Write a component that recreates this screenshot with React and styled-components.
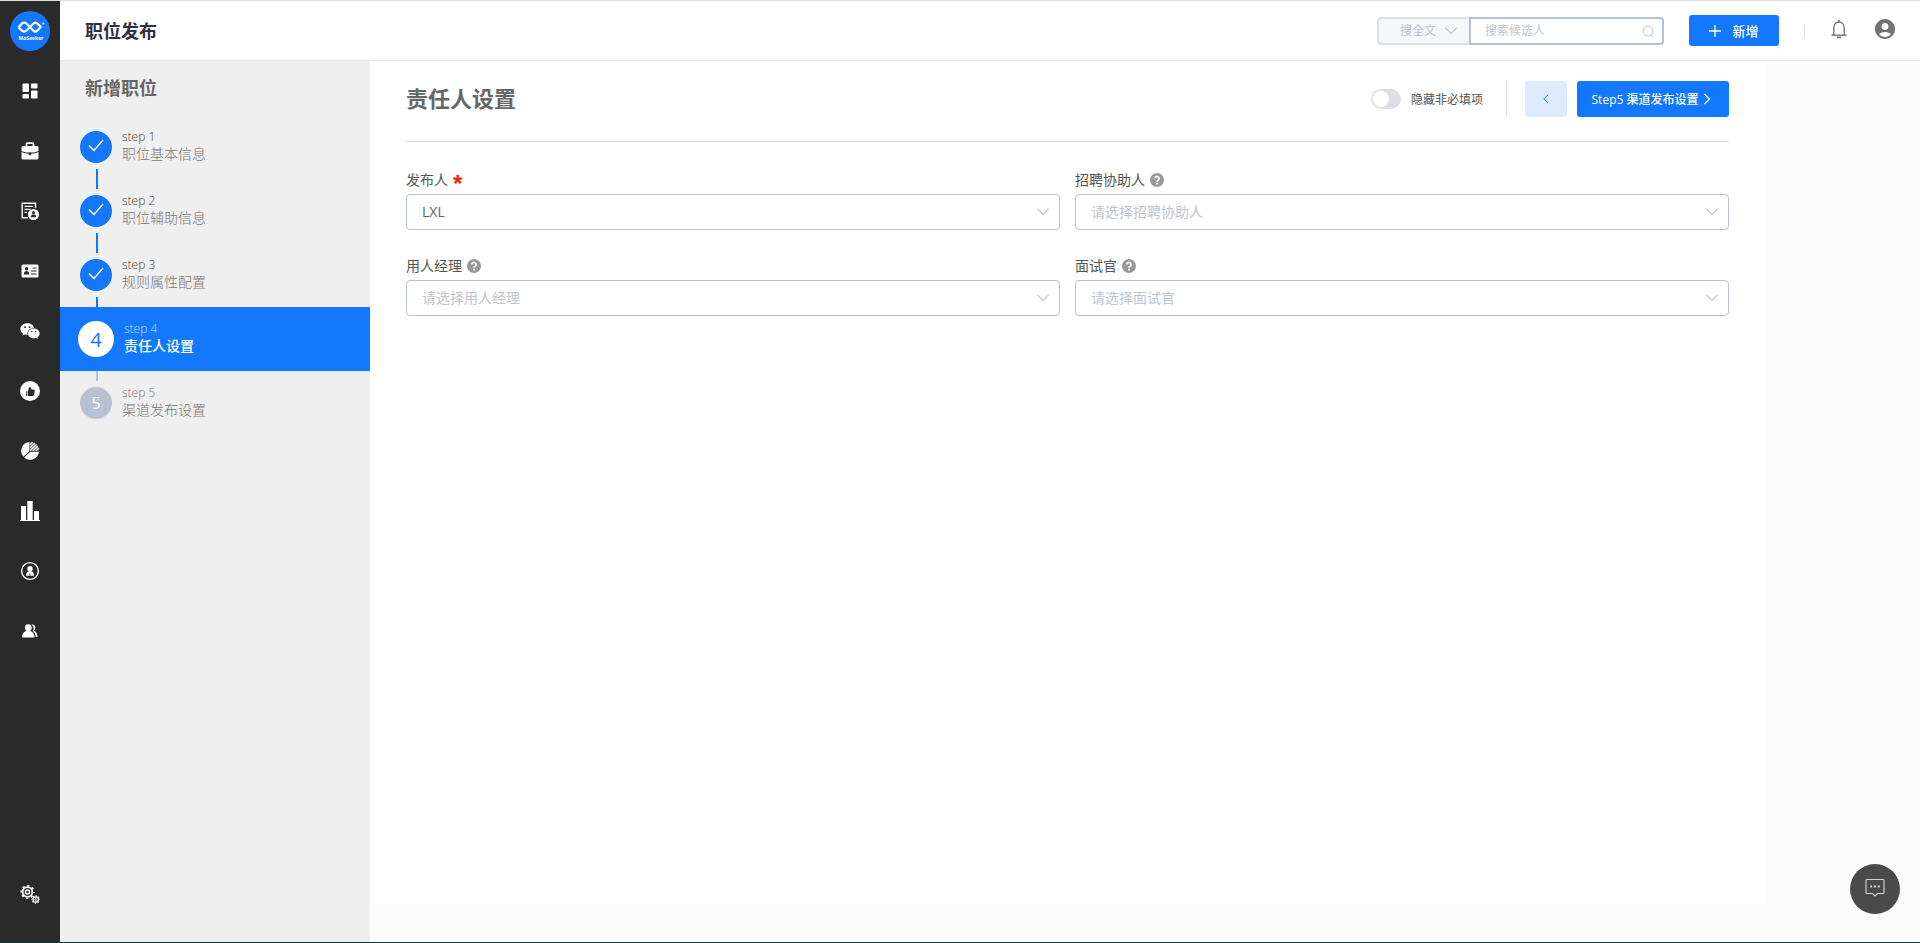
import React, { useState } from 'react';
import styled, { createGlobalStyle, ThemeProvider } from 'styled-components';
import { AiFillWechat, AiFillLike } from 'react-icons/ai';
import { MdAccountCircle } from 'react-icons/md';

const theme = {
  colors: {
    primary: '#1478ff',
    primaryLight: '#deebff',
    dark: '#2a2a2a',
    page: '#fbfbfb',
    panel: '#efefef',
    surface: '#ffffff',
    border: '#b8bfd0',
    line: '#dcdfe6',
    muted: '#b8c1d1',
    placeholder: '#bfc4ce',
    text: '#555555',
    heading: '#666666'
  }
};

const GlobalStyle = createGlobalStyle`
  * {
    box-sizing: border-box;
  }

  body {
    margin: 0;
    font-family: 'Open Sans', 'Noto Sans CJK SC', sans-serif;
    font-size: 14px;
    color: #555555;
  }

  button, input, select {
    font-family: inherit;
    margin: 0;
  }
`;

const Page = styled.div`
  display: flex;
  min-height: 100vh;
  background: ${({ theme }) => theme.colors.page};
  border-top: 1px solid ${({ theme }) => theme.colors.line};
  border-bottom: 1px solid #1f3038;
`;

const Sidebar = styled.nav`
  display: flex;
  flex-direction: column;
  align-items: center;
  flex: 0 0 60px;
  padding: 10px 0 18px;
  background: ${({ theme }) => theme.colors.dark};
`;

const LogoLink = styled.a`
  display: block;
  height: 40px;
  margin-bottom: 10px;
`;

const NavLink = styled.a`
  display: flex;
  align-items: center;
  justify-content: center;
  width: 60px;
  height: 60px;
  margin-top: ${({ $last }) => ($last ? 'auto' : '0')};
  color: #ffffff;
`;

const Content = styled.div`
  display: flex;
  flex-direction: column;
  flex: 1;
  min-width: 0;
`;

const Header = styled.header`
  display: flex;
  align-items: center;
  height: 60px;
  padding: 0 23px 0 25px;
  background: ${({ theme }) => theme.colors.surface};
  border-bottom: 1px solid #e6e8f0;
`;

const PageTitle = styled.h1`
  flex: 1;
  margin: 0;
  font-size: 18px;
  line-height: 24px;
  font-weight: 700;
  color: #303040;
`;

const SearchBox = styled.form`
  display: flex;
  height: 28px;
  margin-right: 25px;
`;

const ScopeWrap = styled.div`
  display: grid;
  align-items: center;
  width: 92px;
  background: #f5f7fa;
  border: 2px solid ${({ theme }) => theme.colors.line};
  border-right: none;
  border-radius: 4px 0 0 4px;

  > * {
    grid-area: 1 / 1;
  }

  > svg {
    justify-self: end;
    margin-right: 11px;
    pointer-events: none;
  }
`;

const ScopeSelect = styled.select`
  appearance: none;
  width: 100%;
  height: 24px;
  padding: 0 0 0 21px;
  border: none;
  outline: none;
  background: transparent;
  font-size: 12px;
  color: ${({ theme }) => theme.colors.muted};
`;

const SearchField = styled.div`
  display: flex;
  align-items: center;
  width: 195px;
  padding: 0 8px 0 14px;
  border: 2px solid ${({ theme }) => theme.colors.muted};
  border-radius: 0 4px 4px 0;
`;

const SearchInput = styled.input`
  flex: 1;
  min-width: 0;
  padding: 0;
  border: none;
  outline: none;
  background: transparent;
  font-size: 12px;

  &::placeholder {
    color: ${({ theme }) => theme.colors.placeholder};
  }
`;

const Button = styled.button`
  display: flex;
  align-items: center;
  justify-content: center;
  gap: ${({ $gap }) => $gap || '6px'};
  height: ${({ $compact }) => ($compact ? '31px' : '36px')};
  width: ${({ $width }) => $width || 'auto'};
  padding: 0;
  border: none;
  border-radius: 3px;
  background: ${({ theme, $light }) => ($light ? theme.colors.primaryLight : theme.colors.primary)};
  color: ${({ theme, $light }) => ($light ? theme.colors.primary : '#ffffff')};
  font-size: ${({ $compact }) => ($compact ? '13px' : '12px')};
  font-weight: 500;
  cursor: pointer;
`;

const Separator = styled.span`
  width: 1px;
  height: ${({ $tall }) => ($tall ? '36px' : '14px')};
  background: ${({ theme }) => theme.colors.line};
`;

const IconButton = styled.button`
  display: flex;
  margin-bottom: 4px;
  padding: 0;
  border: none;
  background: none;
  color: #737373;
  cursor: pointer;
`;

const HeaderTools = styled.div`
  display: flex;
  align-items: center;
  gap: 25px;

  ${IconButton} {
    margin-bottom: 4px;
  }
`;

const Body = styled.div`
  display: flex;
  flex: 1;
`;

const StepsPanel = styled.aside`
  flex: 0 0 310px;
  padding-top: 15px;
  background: ${({ theme }) => theme.colors.panel};
`;

const StepsTitle = styled.h2`
  margin: 0 0 15px;
  padding-left: 25px;
  font-size: 18px;
  line-height: 24px;
  font-weight: 700;
  color: ${({ theme }) => theme.colors.heading};
`;

const StepList = styled.ol`
  isolation: isolate;
  margin: 0;
  padding: 0;
  list-style: none;
`;

const Step = styled.li`
  position: relative;
  display: flex;
  align-items: center;
  height: 64px;
  padding-left: ${({ $active }) => ($active ? '18px' : '20px')};
  background: ${({ theme, $active }) => ($active ? theme.colors.primary : 'transparent')};

  /* connector to the next step, hidden where it runs under the active row */
  &:not(:last-child)::after {
    content: '';
    position: absolute;
    left: 36px;
    top: 54px;
    width: 2px;
    height: 20px;
    background: ${({ theme, $done }) => ($done ? theme.colors.primary : theme.colors.muted)};
    z-index: -1;
  }
`;

const StepCircle = styled.span`
  display: flex;
  align-items: center;
  justify-content: center;
  width: ${({ $active }) => ($active ? '36px' : '32px')};
  height: ${({ $active }) => ($active ? '36px' : '32px')};
  margin-right: 10px;
  border-radius: 50%;
  background: ${({ theme, $active, $done }) =>
    $active ? '#ffffff' : $done ? theme.colors.primary : theme.colors.muted};
  color: ${({ theme, $active }) => ($active ? theme.colors.primary : '#ffffff')};
  font-size: ${({ $active }) => ($active ? '20px' : '16px')};
`;

const StepText = styled.div`
  display: flex;
  flex-direction: column;
  margin-bottom: 4px;
  font-weight: 300;
  line-height: 17px;
  color: ${({ $active }) => ($active ? '#ffffff' : '#777777')};
`;

const StepNumber = styled.span`
  font-size: 12px;
  color: ${({ $active, $done }) => ($active ? '#c4dcff' : $done ? '#444444' : '#777777')};
`;

const StepName = styled.span`
  font-size: 14px;
  font-weight: ${({ $active }) => ($active ? 500 : 300)};
`;

const Main = styled.main`
  flex: 1;
  min-width: 0;
  margin: 0 155px 38px 0;
  padding: 20px 36px;
  background: ${({ theme }) => theme.colors.surface};
`;

const MainHeader = styled.div`
  display: flex;
  align-items: center;
  padding-bottom: 24px;
  border-bottom: 1px solid ${({ theme }) => theme.colors.line};
`;

const MainTitle = styled.h2`
  flex: 1;
  margin: 0 0 2px;
  font-size: 22px;
  line-height: 30px;
  font-weight: 700;
  color: ${({ theme }) => theme.colors.heading};
`;

const ToggleLabel = styled.label`
  display: flex;
  align-items: center;
  gap: 10px;
  margin-right: 23px;
  font-size: 12px;
  cursor: pointer;
`;

const Toggle = styled.input`
  appearance: none;
  display: flex;
  width: 30px;
  height: 20px;
  margin: 0;
  padding: 2px;
  border-radius: 10px;
  background: ${({ theme, checked }) => (checked ? theme.colors.primary : theme.colors.line)};
  justify-content: ${({ checked }) => (checked ? 'flex-end' : 'flex-start')};
  cursor: pointer;

  &::before {
    content: '';
    width: 16px;
    height: 16px;
    border-radius: 50%;
    background: #ffffff;
  }
`;

const StepButtons = styled.div`
  display: flex;
  gap: 10px;
  margin-left: 18px;
`;

const FormGrid = styled.form`
  display: grid;
  grid-template-columns: 1fr 1fr;
  gap: 26px 15px;
  padding-top: 28px;
`;

const Field = styled.div`
  display: flex;
  flex-direction: column;
  gap: 4px;
`;

const FieldLabel = styled.label`
  display: flex;
  align-items: center;
  gap: 5px;
  height: 20px;
  font-size: 14px;
  line-height: 20px;
`;

const Required = styled.span`
  height: 20px;
  font-family: 'Liberation Sans', sans-serif;
  font-size: 24px;
  line-height: 28px;
  font-weight: 700;
  color: #ff1a00;
`;

const SelectWrap = styled.div`
  display: grid;
  align-items: center;

  > * {
    grid-area: 1 / 1;
  }

  > svg {
    justify-self: end;
    margin-right: 10px;
    pointer-events: none;
  }
`;

const Select = styled.select`
  appearance: none;
  width: 100%;
  height: 36px;
  padding: 0 30px 2px 15px;
  border: 1px solid ${({ theme }) => theme.colors.border};
  border-radius: 4px;
  outline: none;
  background: #ffffff;
  font-size: 14px;
  color: ${({ theme, $empty }) => ($empty ? theme.colors.placeholder : '#606266')};
`;

const ChatButton = styled.button`
  position: fixed;
  right: 20px;
  bottom: 29px;
  display: flex;
  align-items: center;
  justify-content: center;
  width: 50px;
  height: 50px;
  padding: 0 0 2px;
  border: none;
  border-radius: 50%;
  background: #4a4a4a;
  cursor: pointer;
`;

function Chevron({ color = '#c0c4cc', dir = 'down', size = 14 }) {
  const paths = {
    down: 'M1.5 4L7 9.500l5.500-5.500',
    left: 'M9.500 2L4.500 7l5 5',
    right: 'M4.500 2l5 5-5 5'
  };
  return (
    <svg width={size} height={size} viewBox="0 0 14 14" fill="none" stroke={color} strokeWidth="1.1">
      <path d={paths[dir]} />
    </svg>
  );
}

function HelpIcon() {
  return (
    <svg width="14" height="14" viewBox="0 0 14 14">
      <circle cx="7" cy="7" r="7" fill="#999999" />
      <path d="M4.900 5.500a2.100 2 0 1 1 3.300 1.600c-.8.500-1.200.8-1.200 1.600" fill="none" stroke="#fff" strokeWidth="1.700" />
      <rect x="6.100" y="9.800" width="1.800" height="1.700" fill="#fff" />
    </svg>
  );
}

function Logo() {
  return (
    <svg width="40" height="40" viewBox="0 0 40 40">
      <circle cx="20" cy="20" r="20" fill="#1478ff" />
      <path
        d="M8.500 16.200L12.200 12.200Q14.300 10.800 16.400 12.500L23.500 19.800Q25.300 21.200 27.200 19.800L31 15.500M8.500 16.200L12.200 19.900Q14.300 21.300 16.400 19.700L23.500 12.500Q25.300 11 27.200 12.500L31 16"
        fill="none"
        stroke="#fff"
        strokeWidth="2.200"
      />
      <circle cx="33.300" cy="12.500" r="1" fill="#fff" />
      <text x="21" y="28.500" fill="#fff" fontSize="5" fontWeight="700" textAnchor="middle">MoSeeker</text>
    </svg>
  );
}

function DashboardIcon() {
  return (
    <svg width="16" height="16" viewBox="0 0 16 16" fill="currentColor">
      <rect x="0.500" y="0.500" width="6.500" height="8.500" rx="0.800" />
      <rect x="0.500" y="11" width="6.500" height="4.500" rx="0.800" />
      <rect x="9" y="0.500" width="6.500" height="5" rx="0.800" />
      <rect x="9" y="7.500" width="6.500" height="8" rx="0.800" />
    </svg>
  );
}

function BriefcaseIcon() {
  return (
    <svg width="18" height="18" viewBox="0 0 18 18">
      <path d="M5.500 5V2.200Q5.500 1.200 6.500 1.200h5q1 0 1 1V5" fill="none" stroke="#fff" strokeWidth="1.700" />
      <rect x="0.500" y="4" width="17" height="13.500" rx="1.500" fill="#fff" />
      <path d="M0 9.500Q9 13 18 9.500" fill="none" stroke="#2a2a2a" strokeWidth="1" />
      <path d="M7.700 10.500h2.600v2L9 13.500l-1.300-1z" fill="#2a2a2a" />
    </svg>
  );
}

function ResumeIcon() {
  return (
    <svg width="18" height="18" viewBox="0 0 18 18" fill="none" stroke="#fff">
      <path d="M7 15.800H1.200V1.200h13.300V6" strokeWidth="1.400" />
      <path d="M3.500 4.300h8.500M3.500 7.300h6M3.500 10.300h2.500" strokeWidth="1.300" />
      <circle cx="12.500" cy="12.500" r="5.500" fill="#fff" stroke="none" />
      <circle cx="12.500" cy="10.600" r="1.500" fill="#2a2a2a" stroke="none" />
      <path d="M9.800 15.200c0-2 1.200-3 2.700-3s2.700 1 2.700 3z" fill="#2a2a2a" stroke="none" />
    </svg>
  );
}

function CardIcon() {
  return (
    <svg width="18" height="14" viewBox="0 0 18 14">
      <rect x="0.500" y="0.500" width="17" height="13" rx="1.500" fill="#fff" />
      <circle cx="5.600" cy="4.700" r="1.700" fill="#2a2a2a" />
      <path d="M2.800 10.500c0-2.300 1-3.500 2.800-3.500s2.800 1.200 2.800 3.500z" fill="#2a2a2a" />
      <path d="M11.500 4h4M10 7h5.500M10 10h5.500" stroke="#2a2a2a" strokeWidth="1" />
    </svg>
  );
}

const LikeCircle = styled.span`
  display: flex;
  align-items: center;
  justify-content: center;
  width: 20px;
  height: 20px;
  border-radius: 50%;
  background: #ffffff;
  color: ${({ theme }) => theme.colors.dark};
`;

function PieIcon() {
  return (
    <svg width="20" height="20" viewBox="0 0 20 20">
      <path d="M9.500 1A9 9 0 0 0 3.400 15.800L9.500 10z" fill="#fff" />
      <path d="M19 10.800H10.200L4.200 16.600A9 9 0 0 0 19 10.800z" fill="#fff" />
      <path d="M10.300 1A9 9 0 0 1 19 9.800H10.300z" fill="#777" />
      <path d="M10.300 3.500l2.300-2.300M10.300 6.500l4.500-4.500M10.300 9.500l6.200-6.200M13 9.800l4.800-4.800M16 9.800l2.800-2.800" stroke="#fff" strokeWidth="1.100" />
    </svg>
  );
}

function BarsIcon() {
  return (
    <svg width="20" height="20" viewBox="0 0 20 20" fill="currentColor">
      <rect x="1" y="5" width="5" height="14" />
      <rect x="7.300" y="0" width="5.400" height="19" rx="0.500" />
      <rect x="14" y="10" width="5" height="9" />
      <rect x="0" y="19" width="20" height="1" />
    </svg>
  );
}

function UserRingIcon() {
  return (
    <svg width="20" height="20" viewBox="0 0 20 20">
      <circle cx="10" cy="10" r="8.400" fill="none" stroke="#fff" strokeWidth="1.400" />
      <circle cx="10" cy="7.800" r="2.700" fill="#fff" />
      <path d="M6 14.700c0-2.400 1.200-4.700 4-4.700s4 2.300 4 4.700z" fill="#fff" />
      <path d="M10 11.500l-.7 3h1.400z" fill="#2a2a2a" />
    </svg>
  );
}

function UsersIcon() {
  return (
    <svg width="16" height="14" viewBox="0 0 16 14" fill="#fff">
      <path d="M9.500.7c2-.6 3.800.5 3.800 2.700 0 1.500-.7 2.600-1.500 3.100 2.200.9 3.500 2.700 3.700 6.500h-1.800c-.2-3-1.200-4.700-3-6 1.300-1.800 1.400-4.500-1.200-6.300z" />
      <circle cx="6.300" cy="3.700" r="3.400" />
      <path d="M0 13.500c0-4.200 2.500-6.700 6.300-6.700s6.200 2.500 6.200 6.700z" />
    </svg>
  );
}

function GearsIcon() {
  return (
    <svg width="20" height="20" viewBox="0 0 20 20" fill="none" stroke="#fff">
      <circle cx="7.500" cy="8" r="4.900" strokeWidth="1.800" />
      <circle cx="7.500" cy="8" r="6.300" strokeWidth="1.600" strokeDasharray="2.200 2.748" strokeDashoffset="1.100" />
      <circle cx="7.500" cy="8" r="2" strokeWidth="1.500" />
      <circle cx="15.700" cy="15.500" r="2.700" strokeWidth="1.200" />
      <circle cx="15.700" cy="15.500" r="3.600" strokeWidth="1.200" strokeDasharray="1.400 1.427" strokeDashoffset="0.700" />
      <circle cx="15.700" cy="15.500" r="0.900" strokeWidth="0.900" />
    </svg>
  );
}

function BellIcon() {
  return (
    <svg width="18" height="20" viewBox="-1 0 18 20" fill="none" stroke="currentColor" strokeWidth="1.400">
      <path d="M2.800 16V9c0-3.400 2-6 5.200-6s5.200 2.600 5.200 6v7" />
      <path d="M0.500 16.200h15" />
      <circle cx="8" cy="1.900" r="1" fill="currentColor" stroke="none" />
      <path d="M6 18.400h4" strokeWidth="1.600" />
    </svg>
  );
}

function ChatIcon() {
  return (
    <svg width="20" height="20" viewBox="0 0 20 20" fill="none" stroke="#d5d5d5">
      <path d="M2 1.500h16q1 0 1 1v12q0 1-1 1h-5.500L10 18l-2.500-2.500H2q-1 0-1-1v-12q0-1 1-1z" strokeWidth="1.100" />
      <path d="M5.200 8.500h2M9 8.500h2M12.800 8.500h2" strokeWidth="1.800" />
    </svg>
  );
}

const navItems = [
  { id: 'dashboard', icon: <DashboardIcon /> },
  { id: 'jobs', icon: <BriefcaseIcon /> },
  { id: 'resumes', icon: <ResumeIcon /> },
  { id: 'cards', icon: <CardIcon /> },
  { id: 'wechat', icon: <AiFillWechat size={22} /> },
  { id: 'recommend', icon: <LikeCircle><AiFillLike size={11} /></LikeCircle> },
  { id: 'analysis', icon: <PieIcon /> },
  { id: 'reports', icon: <BarsIcon /> },
  { id: 'account', icon: <UserRingIcon /> },
  { id: 'team', icon: <UsersIcon /> }
];

const steps = ['职位基本信息', '职位辅助信息', '规则属性配置', '责任人设置', '渠道发布设置'];

const fields = [
  { id: 'publisher', label: '发布人', required: true, value: 'LXL' },
  { id: 'assistant', label: '招聘协助人', placeholder: '请选择招聘协助人' },
  { id: 'manager', label: '用人经理', placeholder: '请选择用人经理' },
  { id: 'interviewer', label: '面试官', placeholder: '请选择面试官' }
];

function StepItem({ index, name, current }) {
  const number = index + 1;
  const active = number === current;
  const done = number < current;

  return (
    <Step $active={active} $done={done}>
      <StepCircle $active={active} $done={done}>
        {done ? (
          <svg width="16" height="16" viewBox="0 0 16 16" fill="none" stroke="#fff" strokeWidth="1.300">
            <path d="M1 6.500l5 5L15 1" />
          </svg>
        ) : number}
      </StepCircle>
      <StepText $active={active}>
        <StepNumber $active={active} $done={done}>step {number}</StepNumber>
        <StepName $active={active}>{name}</StepName>
      </StepText>
    </Step>
  );
}

function App() {
  const [hideOptional, setHideOptional] = useState(false);
  const currentStep = 4;

  return (
    <ThemeProvider theme={theme}>
      <GlobalStyle />
      <Page>
        <Sidebar>
          <LogoLink href="#"><Logo /></LogoLink>
          {navItems.map(item => (
            <NavLink key={item.id} href={`#${item.id}`}>{item.icon}</NavLink>
          ))}
          <NavLink href="#settings" $last><GearsIcon /></NavLink>
        </Sidebar>

        <Content>
          <Header>
            <PageTitle>职位发布</PageTitle>
            <SearchBox onSubmit={e => e.preventDefault()}>
              <ScopeWrap>
                <ScopeSelect aria-label="搜全文">
                  <option>搜全文</option>
                </ScopeSelect>
                <Chevron color="#b8c1d1" />
              </ScopeWrap>
              <SearchField>
                <SearchInput type="text" aria-label="搜索候选人" placeholder="搜索候选人" />
                <svg width="12" height="12" viewBox="0 0 12 12" fill="none" stroke="#b8c1d1">
                  <circle cx="6" cy="6" r="5" />
                  <path d="M9 10l2 1.500" />
                </svg>
              </SearchField>
            </SearchBox>
            <HeaderTools>
              <Button $compact $width="90px" $gap="11px">
                <svg width="12" height="12" viewBox="0 0 12 12" stroke="#fff" strokeWidth="1.300">
                  <path d="M6 0v12M0 6h12" />
                </svg>
                新增
              </Button>
              <Separator />
              <IconButton aria-label="通知"><BellIcon /></IconButton>
              <IconButton aria-label="账号"><MdAccountCircle size={24} /></IconButton>
            </HeaderTools>
          </Header>

          <Body>
            <StepsPanel>
              <StepsTitle>新增职位</StepsTitle>
              <StepList>
                {steps.map((name, index) => (
                  <StepItem key={name} index={index} name={name} current={currentStep} />
                ))}
              </StepList>
            </StepsPanel>

            <Main>
              <MainHeader>
                <MainTitle>责任人设置</MainTitle>
                <ToggleLabel>
                  <Toggle
                    type="checkbox"
                    checked={hideOptional}
                    onChange={e => setHideOptional(e.target.checked)}
                  />
                  隐藏非必填项
                </ToggleLabel>
                <Separator $tall />
                <StepButtons>
                  <Button $light $width="42px" aria-label="上一步">
                    <Chevron dir="left" color="#1478ff" size={12} />
                  </Button>
                  <Button $width="152px" $gap="2px">
                    Step5 渠道发布设置
                    <Chevron dir="right" color="#ffffff" />
                  </Button>
                </StepButtons>
              </MainHeader>

              <FormGrid>
                {fields.map(field => (
                  <Field key={field.id}>
                    <FieldLabel htmlFor={field.id}>
                      {field.label}
                      {field.required ? <Required>*</Required> : <HelpIcon />}
                    </FieldLabel>
                    <SelectWrap>
                      <Select id={field.id} $empty={!field.value}>
                        <option>{field.value || field.placeholder}</option>
                      </Select>
                      <Chevron />
                    </SelectWrap>
                  </Field>
                ))}
              </FormGrid>
            </Main>
          </Body>
        </Content>

        <ChatButton aria-label="在线客服"><ChatIcon /></ChatButton>
      </Page>
    </ThemeProvider>
  );
}

export default App;
